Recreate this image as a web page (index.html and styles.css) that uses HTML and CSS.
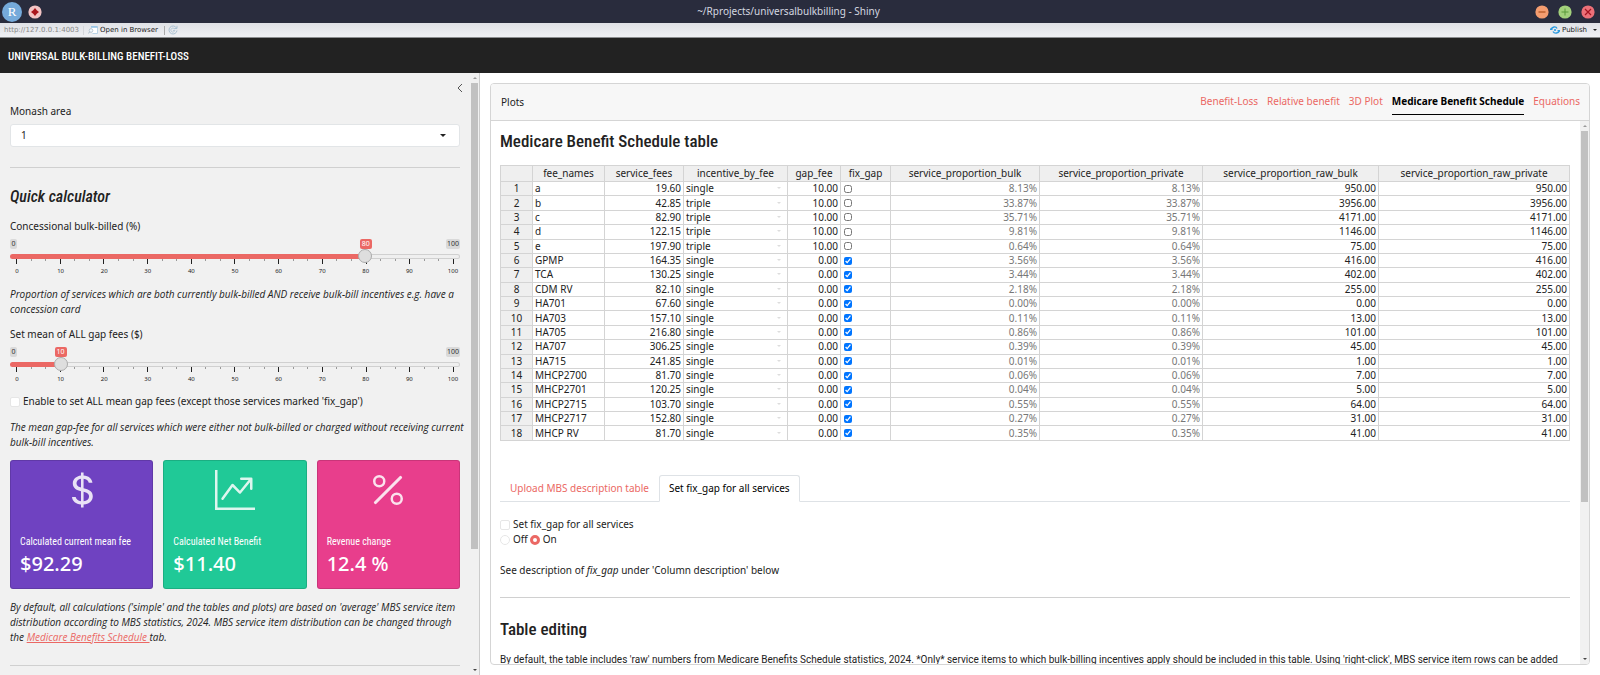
FILE: index.html
```html
<!DOCTYPE html>
<html lang="en">
<head>
<meta charset="utf-8">
<title>~/Rprojects/universalbulkbilling - Shiny</title>
<link rel="stylesheet" href="styles.css">
</head>
<body>
<div class="titlebar">
  <div class="title-left">
    <svg width="20" height="20" viewBox="0 0 20 20"><circle cx="10" cy="10" r="10" fill="#75aadb"/><text x="10" y="14" text-anchor="middle" class="r-mark">R</text></svg>
    <svg width="14" height="14" viewBox="0 0 14 14"><circle cx="7" cy="7" r="6.6" fill="#f2c4c4"/><path d="M7 3 8.800 5.200 11 7 8.800 8.800 7 11 5.200 8.800 3 7 5.200 5.200Z" fill="#a8161c"/></svg>
  </div>
  <div class="window-title">~/Rprojects/universalbulkbilling - Shiny</div>
  <div class="title-right">
    <button class="win" aria-label="Minimize"><svg width="14" height="14" viewBox="0 0 14 14"><circle cx="7" cy="7" r="6.6" fill="#f49d70"/><path d="M3.500 7h7" stroke="#b0501d" stroke-width="1.200"/></svg></button>
    <button class="win" aria-label="Maximize"><svg width="14" height="14" viewBox="0 0 14 14"><circle cx="7" cy="7" r="6.6" fill="#a3d17c"/><path d="M3.500 7h7M7 3.500v7" stroke="#5a9a3a"/></svg></button>
    <button class="win" aria-label="Close"><svg width="14" height="14" viewBox="0 0 14 14"><circle cx="7" cy="7" r="6.6" fill="#ec7078"/><path d="m4 4 6 6m0-6-6 6" stroke="#a31420" stroke-width="1.200"/></svg></button>
  </div>
</div>
<div class="toolbar">
  <span class="url">http://127.0.0.1:4003</span>
  <span class="sep faint"></span>
  <button class="tool"><svg width="10" height="8" viewBox="0 0 10 8"><path d="M3 .5h6.500v7H4.500" fill="#fff" stroke="#b9d3e6"/><path d="M3 1h6.500" stroke="#8fc0e4" stroke-width="1.500"/><circle cx="3" cy="4.500" r="1.800" fill="#f4f9fd" stroke="#a9bccb" stroke-width=".8"/><path d="M1.700 5.800.3 7.500" stroke="#a9bccb"/></svg>Open in Browser</button>
  <span class="sep"></span>
  <button class="tool" aria-label="Refresh"><svg width="10" height="10" viewBox="0 0 10 10" fill="none" stroke="#a9c0d2"><path d="M8.500 3A4 4 0 1 0 9 5.500M9 .8V3.500H6.300"/><path d="M6.500 4A2 2 0 1 0 6.800 5.500H5" stroke-width=".8"/></svg></button>
  <button class="tool publish"><svg width="10" height="8" viewBox="0 0 10 8" fill="none" stroke="#2b9ae0" stroke-width="1.400"><path d="M1 3.500C2 .5 6 0 7 2.500M9.500 4.500C8.500 7.500 4.500 8 3 5.500"/><circle cx="5" cy="4" r="1.100" fill="#2b9ae0" stroke="none"/><path d="M0 3.200h2.500M7.500 4.800H10"/></svg>Publish<i class="caret small"></i></button>
</div>
<header class="navbar">UNIVERSAL BULK-BILLING BENEFIT-LOSS</header>
<div class="layout">
  <aside class="sidebar">
    <div class="side-scroll">
      <button class="collapse" aria-label="Toggle sidebar"><svg width="6" height="10" viewBox="0 0 6 10"><path d="M5 1 1 5l4 4" fill="none" stroke="#444" stroke-width=".9"/></svg></button>
      <label for="area">Monash area</label>
      <div class="select-wrap"><select id="area"><option>1</option></select><i class="caret"></i></div>
      <hr>
      <h4 class="quick">Quick calculator</h4>
      <label for="conc">Concessional bulk-billed (%)</label>
      <div class="slider" style="--v:80">
        <div class="bounds"><span>0</span><span>100</span></div>
        <output class="bubble" for="conc">80</output>
        <input type="range" id="conc" min="0" max="100" value="80">
        <div class="ticks"></div><div class="nums"></div>
      </div>
      <p class="note"><em>Proportion of services which are both currently bulk-billed AND receive bulk-bill incentives e.g. have a concession card</em></p>
      <label for="gap">Set mean of ALL gap fees ($)</label>
      <div class="slider" style="--v:10">
        <div class="bounds"><span>0</span><span>100</span></div>
        <output class="bubble" for="gap">10</output>
        <input type="range" id="gap" min="0" max="100" value="10">
        <div class="ticks"></div><div class="nums"></div>
      </div>
      <label class="check"><input type="checkbox" class="box">Enable to set ALL mean gap fees (except those services marked 'fix_gap')</label>
      <p class="note"><em>The mean gap-fee for all services which were either not bulk-billed or charged without receiving current bulk-bill incentives.</em></p>
      <div class="values">
        <section class="value purple">
          <svg width="40" height="40" viewBox="0 0 16 16"><path d="M4 10.781c.148 1.667 1.513 2.850 3.591 3.003V15h1.043v-1.216c2.270-.179 3.678-1.438 3.678-3.300 0-1.590-.947-2.510-2.956-3.028l-.722-.187V3.467c1.122.110 1.879.714 2.070 1.616h1.470c-.166-1.600-1.540-2.748-3.540-2.875V1H7.591v1.233c-1.939.230-3.270 1.472-3.270 3.156 0 1.454.966 2.483 2.661 2.917l.610.162v4.031c-1.149-.170-1.940-.800-2.131-1.718zm3.391-3.836c-1.043-.263-1.600-.825-1.600-1.616 0-.944.704-1.641 1.800-1.828v3.495l-.200-.050zm1.591 1.872c1.287.323 1.852.859 1.852 1.769 0 1.097-.826 1.828-2.200 1.939V8.730z"/></svg>
          <h5>Calculated current mean fee</h5><p>$92.29</p>
        </section>
        <section class="value green">
          <svg width="40" height="40" viewBox="0 0 16 16"><path d="M0 0h1v15h15v1H0zm10 3.500a.5.5 0 0 1 .5-.5h4a.5.5 0 0 1 .5.5v4a.5.5 0 0 1-1 0V4.900l-3.613 4.417a.5.5 0 0 1-.740.037L7.060 6.767l-3.656 5.027a.5.5 0 0 1-.808-.588l4-5.500a.5.5 0 0 1 .758-.060l2.609 2.610L13.445 4H10.500a.5.5 0 0 1-.5-.5"/></svg>
          <h5>Calculated Net Benefit</h5><p>$11.40</p>
        </section>
        <section class="value pink">
          <svg width="40" height="40" viewBox="0 0 16 16"><path d="M13.442 2.558a.625.625 0 0 1 0 .884l-10 10a.625.625 0 1 1-.884-.884l10-10a.625.625 0 0 1 .884 0M4.500 6a1.500 1.500 0 1 1 0-3 1.500 1.500 0 0 1 0 3m0 1a2.500 2.500 0 1 0 0-5 2.500 2.500 0 0 0 0 5m7 6a1.500 1.500 0 1 1 0-3 1.500 1.500 0 0 1 0 3m0 1a2.500 2.500 0 1 0 0-5 2.500 2.500 0 0 0 0 5"/></svg>
          <h5>Revenue change</h5><p>12.4 %</p>
        </section>
      </div>
      <p class="note last"><em>By default, all calculations ('simple' and the tables and plots) are based on 'average' MBS service item distribution according to MBS statistics, 2024. MBS service item distribution can be changed through the <a href="#mbs">Medicare Benefits Schedule </a>tab.</em></p>
      <hr class="end">
    </div>
    <div class="scrollbar"><i class="up"></i><div class="track"><div class="thumb side-thumb"></div></div><i class="down"></i></div>
  </aside>
  <main class="main">
    <div class="card">
      <div class="card-header">
        <span>Plots</span>
        <nav class="tabs">
          <a href="#bl">Benefit-Loss</a><a href="#rb">Relative benefit</a><a href="#3d">3D Plot</a><a href="#mbs" class="active">Medicare Benefit Schedule</a><a href="#eq">Equations</a>
        </nav>
      </div>
      <div class="card-main">
        <div class="card-body" id="mbs">
          <h3>Medicare Benefit Schedule table</h3>
          <table class="grid">
            <colgroup><col class="c-num"><col class="c-name"><col class="c-fee"><col class="c-inc"><col class="c-gap"><col class="c-fix"><col class="c-pb"><col class="c-pp"><col class="c-rb"><col class="c-rp"></colgroup>
            <thead><tr><th></th><th>fee_names</th><th>service_fees</th><th>incentive_by_fee</th><th>gap_fee</th><th>fix_gap</th><th>service_proportion_bulk</th><th>service_proportion_private</th><th>service_proportion_raw_bulk</th><th>service_proportion_raw_private</th></tr></thead>
            <tbody id="rows"></tbody>
          </table>
          <nav class="pane-tabs"><a href="#upload">Upload MBS description table</a><a href="#fix" class="active">Set fix_gap for all services</a></nav>
          <div class="choices">
            <label class="check"><input type="checkbox" class="box">Set fix_gap for all services</label>
            <div class="radios"><label class="check"><input type="radio" name="fix" class="dot">Off</label><label class="check"><input type="radio" name="fix" class="dot" checked>On</label></div>
          </div>
          <p class="see">See description of <em>fix_gap</em> under 'Column description' below</p>
          <hr>
          <h3>Table editing</h3>
          <p class="edit">By default, the table includes 'raw' numbers from Medicare Benefits Schedule statistics, 2024. *Only* service items to which bulk-billing incentives apply should be included in this table. Using 'right-click', MBS service item rows can be added</p>
        </div>
        <div class="scrollbar"><i class="up"></i><div class="track"><div class="thumb main-thumb"></div></div><i class="down"></i></div>
      </div>
    </div>
  </main>
</div>
<script src="app.js"></script>
</body>
</html>
```
FILE: styles.css
```css
* { box-sizing: border-box; }
body {
  margin: 0; height: 100vh; overflow: hidden;
  display: flex; flex-direction: column;
  font: 10px/15px "Noto Sans", "Open Sans", sans-serif;
  color: #222; background: #fff;
}
button { border: 0; background: none; padding: 0; font: inherit; color: inherit; display: flex; align-items: center; }
svg { display: block; }
p, h3, h4, h5 { margin: 0; }
a { color: #eb6864; }
hr { border: 0; border-top: 1px solid #d0d0d0; margin: 0; width: 100%; }

.titlebar { flex: none; height: 23px; background: #292c3d; display: grid; grid-template-columns: 1fr auto 1fr; align-items: center; padding: 0 5px 0 2px; color: #d4d7e0; }
.title-left, .title-right { display: flex; align-items: center; gap: 6px; }
.title-right { justify-content: flex-end; gap: 9px; }
.r-mark { font: 13px "Liberation Serif", serif; fill: #fff; }
.window-title { margin-right: 20px; }

.toolbar { flex: none; height: 15px; display: flex; align-items: center; padding: 0 3px 0 4px; background: linear-gradient(#dfe1e6, #f0f1f4); border-bottom: 1px solid #8c8e90; font: 7px/10px "DejaVu Sans", sans-serif; color: #222; }
.url { color: #888; }
.sep { width: 1px; height: 9px; background: #aaa; margin: 0 3px 0 6px; }
.sep.faint { background: #d4d6da; margin: 0 4px; }
.tool { gap: 2px; }
.publish { margin-left: auto; }
.caret { width: 0; height: 0; border: 3px solid transparent; border-top-color: #222; border-bottom: 0; }
.caret.small { border-width: 2px; border-bottom: 0; margin-left: 4px; }

.navbar { flex: none; height: 35px; background: #222; color: #fff; display: flex; align-items: center; padding: 2px 8px 0; font: 500 11px/15px "Roboto Condensed", "Roboto", sans-serif; }

.layout { flex: 1; min-height: 0; display: grid; grid-template-columns: 480px 1fr; }
.sidebar { min-height: 0; display: flex; background: #f1f1f1; border-right: 1px solid #ccc; }
.side-scroll { flex: 1; min-width: 0; overflow: hidden; padding: 10px 10px 0; display: flex; flex-direction: column; }
.side-scroll > * { flex: none; }
.collapse { align-self: flex-end; margin-right: -3px; height: 10px; margin-bottom: 11px; }
.side-scroll > label { display: block; }

.select-wrap { position: relative; margin: 5px 0 20px; }
.select-wrap select { display: block; width: 100%; height: 23px; appearance: none; border: 1px solid #e2e5e7; border-radius: 3px; background: #fff; font: inherit; color: #222; padding: 0 10px; }
.select-wrap .caret { position: absolute; right: 14px; top: 10px; }
.quick { font: italic 500 16px/20px "Roboto Condensed", "Roboto", sans-serif; margin: 19px 0 12px; }

.slider { position: relative; height: 40px; margin: 5px 0 8px; --pos: calc(7px + (100% - 14px) * var(--v) / 100); }
.bounds { display: flex; justify-content: space-between; font-size: 7px; line-height: 10px; color: #333; }
.bounds span { background: #d9d9d9; border-radius: 2px; padding: 0 1px; min-width: 7px; text-align: center; }
.bubble { position: absolute; top: 0; left: var(--pos); transform: translateX(-50%); background: #eb6864; color: #fff; font-size: 7px; line-height: 10px; border-radius: 2px; padding: 0 2px; }
.slider input { appearance: none; display: block; width: 100%; height: 14px; margin: 0; background: none; position: relative; }
.slider input::-webkit-slider-runnable-track {
  height: 5px; border-radius: 3px; border: 1px solid transparent;
  background:
    linear-gradient(to right, #eb6864 calc(var(--v) * 1%), transparent 0) border-box,
    linear-gradient(#efefef, #efefef) padding-box,
    linear-gradient(#d0d0d0, #d0d0d0) border-box;
}
.slider input::-webkit-slider-thumb { appearance: none; width: 14px; height: 14px; margin-top: -6px; border-radius: 50%; background: #dedede; border: 1px solid #ababab; }
.ticks { display: flex; justify-content: space-between; padding: 0 6px; height: 5px; margin-top: -4px; }
.ticks i { width: 1px; height: 2px; background: #999; }
.ticks i.major { height: 5px; background: #222; }
.nums { display: flex; justify-content: space-between; padding: 0 7px; font-size: 6px; line-height: 14px; }
.nums span { width: 0; display: flex; justify-content: center; }

.note { margin: 0 -8px 10px 0; font-family: "Open Sans", "Noto Sans", sans-serif; }
.check { display: flex; align-items: center; gap: 3px; }
.side-scroll > label.check { display: flex; margin: -1px 0 11px; }
.box, .dot { appearance: none; width: 10px; height: 10px; margin: 0; background: #fff; border: 1px solid #e6e6e6; border-radius: 2px; }
.dot { border-radius: 50%; }
.dot:checked { border: 3px solid #eb6864; }

.values { display: grid; grid-template-columns: repeat(3, minmax(0, 1fr)); gap: 10px; margin-bottom: 11px; }
.value { border-radius: 3px; border: 1px solid #0002; padding: 9px; color: #fff; height: 129px; }
.value svg { margin: 0 auto 24px; fill: #fff; opacity: .85; }
.value h5 { font: 400 10px/15px "Roboto Condensed", "Roboto", sans-serif; margin-bottom: 3px; white-space: nowrap; }
.value p { font: 500 20px/24px "Noto Sans", sans-serif; }
.purple { background: #6f42c1; }
.green { background: #20c997; }
.pink { background: #e83e8c; }
.last { margin-bottom: 20px; }

.scrollbar { flex: none; width: 9px; display: flex; flex-direction: column; align-items: center; background: #f1f1f1; }
.scrollbar .up, .scrollbar .down { width: 0; height: 0; border: 2px solid transparent; margin: 4px 0; }
.scrollbar .up { border-bottom-color: #999; border-top: 0; }
.scrollbar .down { border-top-color: #444; border-bottom: 0; }
.track { flex: 1; width: 7px; }
.thumb { background: #c1c1c1; }
.side-thumb { height: 80%; }
.main-thumb { height: 71%; }

.main { padding: 10px; min-width: 0; min-height: 0; display: flex; }
.card { flex: 1; min-width: 0; display: flex; flex-direction: column; border: 1px solid #d5d5d5; border-radius: 4px; overflow: hidden; }
.card-header { flex: none; display: flex; justify-content: space-between; align-items: center; height: 37px; padding: 0 9px 0 10px; background: #f7f7f7; border-bottom: 1px solid #d5d5d5; }
.tabs { display: flex; gap: 9px; }
.tabs a { text-decoration: none; padding: 5px 0; border-bottom: 1px solid transparent; }
.tabs a.active { color: #000; font-weight: bold; border-bottom-color: #000; }
.card-main { flex: 1; min-height: 0; display: flex; }
.card-body { flex: 1; min-width: 0; overflow: hidden; padding: 10px 10px 0 9px; }
h3 { font: 500 17px/20px "Roboto Condensed", "Roboto", sans-serif; }

.grid { width: 100%; height: 276px; margin-top: 14px; border-collapse: collapse; table-layout: fixed; line-height: 12px; }
.grid th, .grid td { padding: 0 2px 1px; border: 1px solid #d4d4d4; white-space: nowrap; overflow: hidden; }
.grid th { background: #efefef; font-weight: normal; text-align: center; }
.grid thead th { height: 16px; }
.grid .n { text-align: right; }
.grid .ro { color: #777; }
.grid input { display: block; width: 8px; height: 8px; margin: 1px 0 0 1px; }
.inc { display: flex; justify-content: space-between; align-items: center; padding-right: 4px; }
.inc i { border: 2px solid transparent; border-top-color: #ddd; border-bottom: 0; }
.c-num { width: 32px; } .c-name { width: 72px; } .c-fee { width: 79px; } .c-inc { width: 104px; } .c-gap { width: 53px; }
.c-fix { width: 50px; } .c-pb { width: 149px; } .c-pp { width: 163px; } .c-rb { width: 176px; } .c-rp { width: 191px; }

.pane-tabs { display: flex; margin-top: 34px; border-bottom: 1px solid #dee2e6; }
.pane-tabs a { text-decoration: none; padding: 5px 9px; border: 1px solid transparent; border-radius: 3px 3px 0 0; margin-bottom: -1px; }
.pane-tabs a.active { color: #000; background: #fff; border-color: #dee2e6 #dee2e6 #fff; }
.choices { margin: 15px 0 16px; }
.radios { display: flex; gap: 2px; }
.see { margin-bottom: 19px; }
.edit { font-family: "Roboto", "Noto Sans", sans-serif; }
.card-body h3 + .edit { margin-top: 13px; }
.card-body hr + h3 { margin-top: 21px; }
```
FILE: app.js
```javascript
const data = [
  ["a", "19.60", "single", "10.00", 0, "8.13%", "950.00"],
  ["b", "42.85", "triple", "10.00", 0, "33.87%", "3956.00"],
  ["c", "82.90", "triple", "10.00", 0, "35.71%", "4171.00"],
  ["d", "122.15", "triple", "10.00", 0, "9.81%", "1146.00"],
  ["e", "197.90", "triple", "10.00", 0, "0.64%", "75.00"],
  ["GPMP", "164.35", "single", "0.00", 1, "3.56%", "416.00"],
  ["TCA", "130.25", "single", "0.00", 1, "3.44%", "402.00"],
  ["CDM RV", "82.10", "single", "0.00", 1, "2.18%", "255.00"],
  ["HA701", "67.60", "single", "0.00", 1, "0.00%", "0.00"],
  ["HA703", "157.10", "single", "0.00", 1, "0.11%", "13.00"],
  ["HA705", "216.80", "single", "0.00", 1, "0.86%", "101.00"],
  ["HA707", "306.25", "single", "0.00", 1, "0.39%", "45.00"],
  ["HA715", "241.85", "single", "0.00", 1, "0.01%", "1.00"],
  ["MHCP2700", "81.70", "single", "0.00", 1, "0.06%", "7.00"],
  ["MHCP2701", "120.25", "single", "0.00", 1, "0.04%", "5.00"],
  ["MHCP2715", "103.70", "single", "0.00", 1, "0.55%", "64.00"],
  ["MHCP2717", "152.80", "single", "0.00", 1, "0.27%", "31.00"],
  ["MHCP RV", "81.70", "single", "0.00", 1, "0.35%", "41.00"]
];

document.getElementById("rows").innerHTML = data.map(([name, fee, inc, gap, fix, share, raw], i) => `
  <tr><th>${i + 1}</th><td>${name}</td><td class="n">${fee}</td>
  <td><div class="inc">${inc}<i></i></div></td><td class="n">${gap}</td>
  <td><input type="checkbox" aria-label="fix_gap ${name}" ${fix ? "checked" : ""}></td>
  <td class="n ro">${share}</td><td class="n ro">${share}</td>
  <td class="n">${raw}</td><td class="n">${raw}</td></tr>`).join("");

document.querySelectorAll(".ticks").forEach(el => {
  el.innerHTML = Array.from({ length: 31 }, (_, i) => `<i class="${i % 3 ? "" : "major"}"></i>`).join("");
});
document.querySelectorAll(".nums").forEach(el => {
  el.innerHTML = Array.from({ length: 11 }, (_, i) => `<span>${i * 10}</span>`).join("");
});
```
